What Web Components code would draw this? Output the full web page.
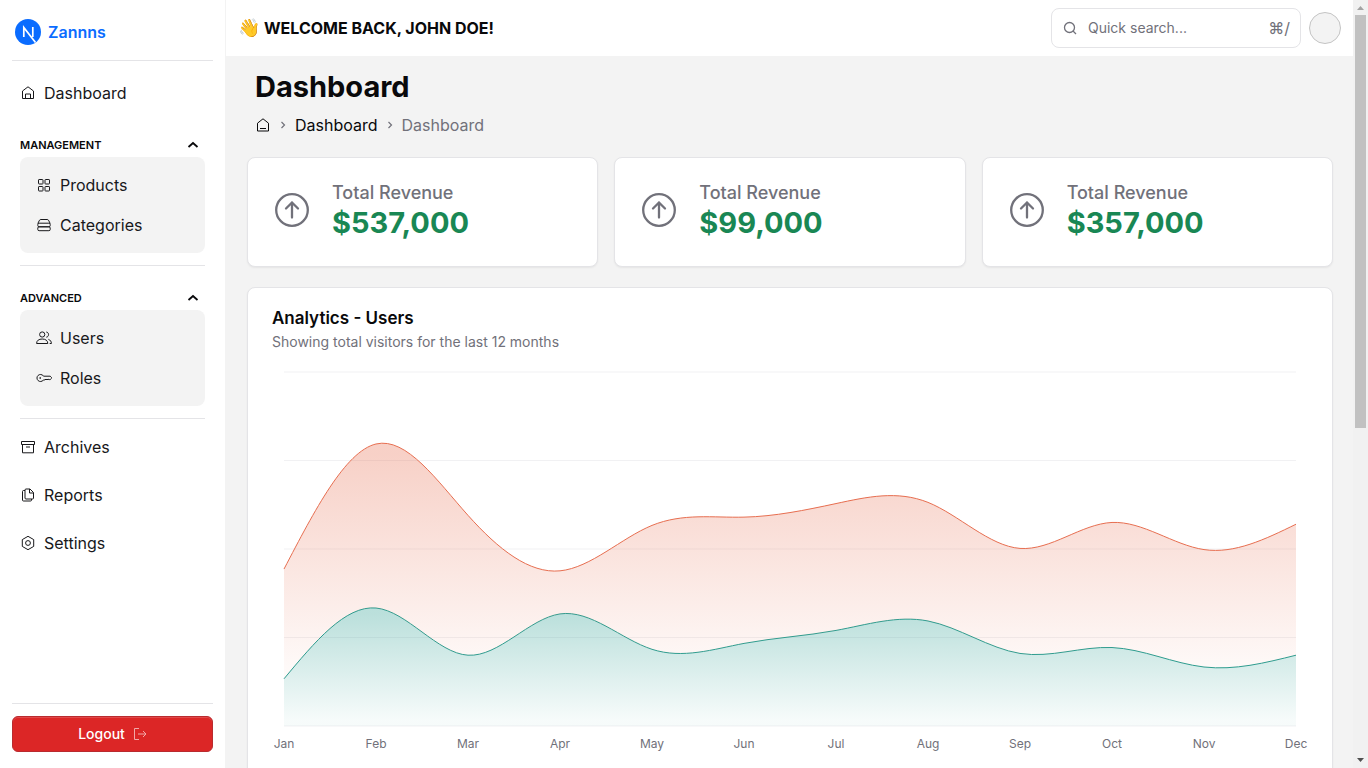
<!DOCTYPE html>
<html lang="en">
<head>
<meta charset="utf-8">
<title>Dashboard</title>
<style>
  body { margin: 0; background: #f3f3f3; color: #09090b; font: 16px/24px Inter, "Liberation Sans", sans-serif; }
</style>
</head>
<body>
<app-shell>
  <side-bar slot="sidebar">
    <nav-item icon="home">Dashboard</nav-item>
    <nav-group label="MANAGEMENT">
      <nav-item icon="grid">Products</nav-item>
      <nav-item icon="stack">Categories</nav-item>
    </nav-group>
    <nav-group label="ADVANCED">
      <nav-item icon="users">Users</nav-item>
      <nav-item icon="key">Roles</nav-item>
    </nav-group>
    <nav-list>
      <nav-item icon="archive">Archives</nav-item>
      <nav-item icon="files">Reports</nav-item>
      <nav-item icon="settings">Settings</nav-item>
    </nav-list>
  </side-bar>
  <top-bar slot="header">WELCOME BACK, JOHN DOE!</top-bar>
  <page-heading>Dashboard</page-heading>
  <stat-grid>
    <stat-card label="Total Revenue">$537,000</stat-card>
    <stat-card label="Total Revenue">$99,000</stat-card>
    <stat-card label="Total Revenue">$357,000</stat-card>
  </stat-grid>
  <chart-card>
    <span slot="title">Analytics - Users</span>
    <span slot="description">Showing total visitors for the last 12 months</span>
    <area-chart></area-chart>
  </chart-card>
</app-shell>

<script>
const component = (name, html, setup) => customElements.define(name, class extends HTMLElement {
  connectedCallback() {
    if (this.shadowRoot) return;
    const root = this.attachShadow({ mode: 'open' });
    root.innerHTML = '<style>*{box-sizing:border-box}:host{display:block;box-sizing:border-box}</style>' + html;
    if (setup) setup(this, root);
  }
});

const icons = {
  home: '<path d="M2.500 6 8 1.800 13.500 6v7.500h-11zM5.500 13.500v-4.500h5v4.500"/>',
  homeMinus: '<path d="M2.500 6.200 8 1.800l5.500 4.400V14h-11zM5 11.500h6"/>',
  grid: '<rect x="2.500" y="2.500" width="4.500" height="4.500" rx=".6"/><rect x="9" y="2.500" width="4.500" height="4.500" rx=".6"/><rect x="2.500" y="9.500" width="4.500" height="4.500" rx=".6"/><rect x="9" y="9.500" width="4.500" height="4.500" rx=".6"/>',
  stack: '<path d="M1.800 6.500 3.500 3.200Q4 2.500 5 2.500h6q1 0 1.500.7l1.700 3.300"/><rect x="1.800" y="6.200" width="12.400" height="3.600" rx="1.300"/><rect x="1.800" y="9.800" width="12.400" height="3.900" rx="1.300"/>',
  users: '<circle cx="6.200" cy="4.500" r="2.600"/><path d="M.6 13.500c0-3 2.300-4.500 5.600-4.500s5.600 1.500 5.600 4.500zM10.300 2c3 .4 3 4.800 0 5.200M12.400 9.300c2 .8 3 2.200 3 4.200h-1.700"/>',
  key: '<path d="M7.200 5.800A3.500 3.500 0 1 0 7.200 10.200L9 9.800l1-.6 1 .6 1-.6 1.200.4h1l1.300-1.300v-.8l-1.300-1.300H8z"/><circle cx="4.200" cy="8" r=".5"/>',
  archive: '<path d="M1.500 2.500h13v3h-13zM2.500 5.500v8.300h11V5.500M6 8h4"/>',
  files: '<path d="M5 3q0-1 1-1h4l3.500 3.500V11q0 1-1 1H6q-1 0-1-1zM9.500 2v4h4M5 3.500H3.500q-1 0-1 1v8.500q0 1 1 1h7q1 0 1-1v-1"/>',
  settings: '<path d="m8 1.300 5.700 3.300v6.800L8 14.700l-5.700-3.300V4.600z"/><circle cx="8" cy="8" r="2.400"/>'
};
const icon = name => `<svg width="16" height="16" viewBox="0 0 16 16" fill="none" stroke="currentColor" aria-hidden="true">${icons[name]}</svg>`;

component('app-shell', `
<style>
  :host { display: flex; height: 100vh; overflow: hidden; }
  aside { flex: 0 0 226px; background: #fff; border-right: 1px solid #f3f3f3; }
  .view { flex: 1; min-width: 0; display: flex; flex-direction: column; }
  main { flex: 1; min-height: 0; overflow-y: auto; scrollbar-width: none; padding: 13px 20px 20px 21px; }
</style>
<aside><slot name="sidebar"></slot></aside>
<div class="view"><slot name="header"></slot><main><slot></slot></main></div>
<scroll-track></scroll-track>`);

component('scroll-track', `
<style>
  :host { flex: 0 0 15px; display: flex; flex-direction: column; background: #f1f1f1; }
  svg { display: block; flex: none; }
  .track { flex: 1; padding: 0 2px; }
  .thumb { height: 56%; background: #c1c1c1; }
</style>
<svg width="15" height="15" viewBox="0 0 15 15"><path d="M4 10 7.500 6 11 10z" fill="#a3a3a3"/></svg>
<div class="track"><div class="thumb"></div></div>
<svg width="15" height="15" viewBox="0 0 15 15"><path d="M4 5h7L7.500 9z" fill="#505050"/></svg>`);

component('side-bar', `
<style>
  :host { height: 100%; display: flex; flex-direction: column; padding: 4px 12px 16px; }
  .brand { display: flex; align-items: center; gap: 6px; height: 56px; padding-left: 2px; color: #0a6cff; font-weight: 600; text-decoration: none; }
  nav { flex: 1; min-height: 0; border-top: 1px solid #e4e4e7; padding: 12px 8px; overflow: hidden; }
  footer { border-top: 1px solid #e4e4e7; padding-top: 12px; }
  button { width: 100%; height: 36px; display: flex; align-items: center; justify-content: center; gap: 8px; border: 1px solid #b92b2f; border-radius: 6px; background: #dc2626; box-shadow: inset 0 1px 0 #e14848; color: #fff; font: 500 14px/20px Inter, sans-serif; }
  button svg { opacity: .6; }
</style>
<a class="brand" href="#">
  <svg width="28" height="28" viewBox="0 0 28 28" aria-hidden="true"><circle cx="14" cy="14" r="13" fill="#0a6cff"/><path d="M9.800 19V9.500L21.500 24.500M18.800 9v10" fill="none" stroke="#fff" stroke-width="1.700"/></svg>
  Zannns</a>
<nav><slot></slot></nav>
<footer><button type="button">Logout <svg width="14" height="14" viewBox="0 0 14 14" fill="none" stroke="currentColor" aria-hidden="true"><path d="M6 1.500H1.500v11H6M5 7h8M10 4l3 3-3 3"/></svg></button></footer>`);

component('nav-item', `
<style>
  a { display: flex; align-items: center; gap: 8px; height: 40px; color: #18181b; text-decoration: none; }
  svg { flex: none; }
</style>
<a href="#"></a>`, (host, root) => {
  root.querySelector('a').innerHTML = icon(host.getAttribute('icon')) + '<slot></slot>';
});

component('nav-group', `
<style>
  :host { padding: 20px 0 12px; border-bottom: 1px solid #e4e4e7; }
  button { width: 100%; height: 24px; display: flex; align-items: center; justify-content: space-between; border: 0; background: none; padding: 0 4px 0 0; color: #09090b; font: 600 11px/16px Inter, sans-serif; }
  .box { background: #f3f3f3; border-radius: 8px; padding: 8px 16px; }
</style>
<button type="button" aria-expanded="true"><span></span><svg width="16" height="16" viewBox="0 0 16 16" fill="none" stroke="currentColor" stroke-width="1.800" aria-hidden="true"><path d="m3.500 10 4.500-4 4.500 4"/></svg></button>
<div class="box"><slot></slot></div>`, (host, root) => {
  root.querySelector('span').textContent = host.getAttribute('label');
});

component('nav-list', `<style>:host { display: flex; flex-direction: column; gap: 8px; padding-top: 8px; }</style><slot></slot>`);

component('top-bar', `
<style>
  :host { flex: 0 0 56px; display: flex; align-items: center; gap: 8px; background: #fff; padding: 0 12px; }
  h2 { flex: 1; display: flex; gap: 4px; margin: 0; font-size: 16px; line-height: 28px; font-weight: 700; white-space: nowrap; }
  h2 span { font-size: 18px; }
  label { display: flex; align-items: center; gap: 10px; width: 250px; height: 40px; border: 1px solid #e4e4e7; border-radius: 8px; padding: 0 10px; color: #71717a; font-size: 14px; line-height: 20px; }
  input { flex: 1; min-width: 0; border: 0; outline: 0; padding: 0; background: none; font: inherit; color: inherit; }
  input::placeholder { color: #71717a; opacity: 1; }
  kbd { font: 16px/20px Inter, "DejaVu Sans", sans-serif; }
  .avatar { width: 32px; height: 32px; border: 1px solid #c4c4c4; border-radius: 50%; background: #f3f3f3; padding: 0; }
</style>
<h2><span>👋</span><slot></slot></h2>
<label><svg width="16" height="16" viewBox="0 0 16 16" fill="none" stroke="currentColor" stroke-width="1.300" aria-hidden="true"><circle cx="7.500" cy="7.500" r="5"/><path d="m11 11 3 3"/></svg><input type="search" placeholder="Quick search..." aria-label="Quick search"><kbd>⌘/</kbd></label>
<button class="avatar" type="button" aria-label="Account"></button>`);

component('page-heading', `
<style>
  :host { padding: 0 8px 20px; }
  h1 { margin: 0 0 8px; font-size: 29px; line-height: 36px; font-weight: 700; }
  nav { display: flex; align-items: center; gap: 8px; }
  nav a { color: inherit; text-decoration: none; display: flex; }
  .sep, .here { color: #71717a; }
</style>
<h1><slot></slot></h1>
<nav aria-label="Breadcrumb"><a href="#" aria-label="Home">${icon('homeMinus')}</a><svg class="sep" width="8" height="8" viewBox="0 0 8 8" fill="none" stroke="currentColor" stroke-width="1.200"><path d="m2.500 1 3 3-3 3"/></svg><a href="#">Dashboard</a><svg class="sep" width="8" height="8" viewBox="0 0 8 8" fill="none" stroke="currentColor" stroke-width="1.200"><path d="m2.500 1 3 3-3 3"/></svg><span class="here">Dashboard</span></nav>`);

component('stat-grid', `<style>:host { display: grid; grid-template-columns: repeat(3, 1fr); gap: 16px; margin-bottom: 20px; }</style><slot></slot>`);

const cardStyle = 'background: #fff; border: 1px solid #e4e4e7; border-radius: 8px; box-shadow: 0 1px 2px rgba(0,0,0,.06);';

component('stat-card', `
<style>
  :host { display: flex; align-items: center; gap: 20px; padding: 24px; ${cardStyle} color: #71717a; }
  svg { margin-bottom: 4px; }
  .label { font-size: 18px; line-height: 22px; font-weight: 500; }
  .value { font-size: 29px; line-height: 38px; font-weight: 700; color: #198754; }
</style>
<svg width="40" height="40" viewBox="0 0 40 40" fill="none" stroke="currentColor" stroke-width="2.300" stroke-linecap="round" stroke-linejoin="round" aria-hidden="true"><circle cx="20" cy="20" r="15.800"/><path d="M20 27.500V12.500M14 18.500l6-6 6 6"/></svg>
<div><div class="label"></div><div class="value"><slot></slot></div></div>`, (host, root) => {
  root.querySelector('.label').textContent = host.getAttribute('label');
});

component('chart-card', `
<style>
  :host { padding: 18px 24px 24px; ${cardStyle} }
  h3 { margin: 0 0 2px; font-size: 17px; line-height: 24px; font-weight: 600; }
  p { margin: 0 0 20px; font-size: 14px; line-height: 20px; color: #71717a; }
</style>
<h3><slot name="title"></slot></h3><p><slot name="description"></slot></p><slot></slot>`);

const months = ['Jan', 'Feb', 'Mar', 'Apr', 'May', 'Jun', 'Jul', 'Aug', 'Sep', 'Oct', 'Nov', 'Dec'];
const mobile = [80, 200, 120, 190, 130, 140, 162, 178, 123, 133, 100, 120];
const total = [266, 478, 357, 263, 340, 354, 377, 379, 301, 345, 299, 342];
const STEP = 92, HEIGHT = 354, MAX = 600;

// Control points of a natural cubic spline through the values.
function controls(v) {
  const n = v.length - 1, a = [], b = [], r = [];
  a[0] = 0; b[0] = 2; r[0] = v[0] + 2 * v[1];
  for (let i = 1; i < n - 1; i++) { a[i] = 1; b[i] = 4; r[i] = 4 * v[i] + 2 * v[i + 1]; }
  a[n - 1] = 2; b[n - 1] = 7; r[n - 1] = 8 * v[n - 1] + v[n];
  for (let i = 1; i < n; i++) { const m = a[i] / b[i - 1]; b[i] -= m; r[i] -= m * r[i - 1]; }
  const first = [], second = [];
  first[n - 1] = r[n - 1] / b[n - 1];
  for (let i = n - 2; i >= 0; i--) first[i] = (r[i] - first[i + 1]) / b[i];
  for (let i = 0; i < n - 1; i++) second[i] = 2 * v[i + 1] - first[i + 1];
  second[n - 1] = (v[n] + first[n - 1]) / 2;
  return [first, second];
}
function curve(values, reverse) {
  let pts = values.map((v, i) => [i * STEP, HEIGHT - v / MAX * HEIGHT]);
  if (reverse) pts = pts.reverse();
  const [x1, x2] = controls(pts.map(p => p[0])), [y1, y2] = controls(pts.map(p => p[1]));
  return (reverse ? 'L' : 'M') + pts[0] + pts.slice(1).map((p, i) => `C${x1[i]},${y1[i]} ${x2[i]},${y2[i]} ${p}`).join('');
}

component('area-chart', `
<style>
  :host { padding: 0 12px; }
  svg { display: block; width: 100%; height: 354px; overflow: visible; }
  svg * { vector-effect: non-scaling-stroke; }
  .labels { display: flex; justify-content: space-between; margin-top: 10px; font-size: 12px; line-height: 16px; color: #71717a; }
  .labels span { display: flex; justify-content: center; width: 0; }
</style>
<svg viewBox="0 0 1012 354" preserveAspectRatio="none" role="img" aria-label="Visitors by month"></svg>
<div class="labels">${months.map(m => `<span>${m}</span>`).join('')}</div>`, (host, root) => {
  const gradient = (id, color) => `<linearGradient id="${id}" x1="0" y1="0" x2="0" y2="1"><stop offset="5%" stop-color="${color}" stop-opacity=".8"/><stop offset="95%" stop-color="${color}" stop-opacity=".1"/></linearGradient>`;
  root.querySelector('svg').innerHTML = `
    <defs>${gradient('warm', '#e76e50')}${gradient('cool', '#2a9d90')}</defs>
    <path d="M0 0H1012M0 88.500H1012M0 177H1012M0 265.500H1012M0 354H1012" stroke="#e4e4e7" stroke-opacity=".5"/>
    <path d="${curve(mobile)}L1012,354L0,354Z" fill="url(#cool)" fill-opacity=".4"/>
    <path d="${curve(mobile)}" fill="none" stroke="#2a9d90"/>
    <path d="${curve(total)}${curve(mobile, true)}Z" fill="url(#warm)" fill-opacity=".4"/>
    <path d="${curve(total)}" fill="none" stroke="#e76e50"/>`;
});
</script>
</body>
</html>
